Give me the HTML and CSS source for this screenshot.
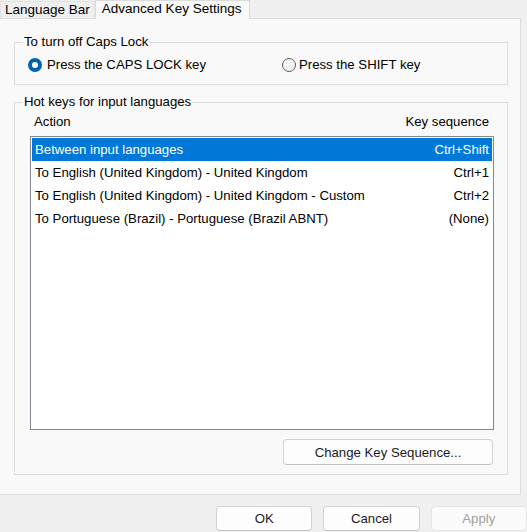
FILE: index.html
```html
<!DOCTYPE html>
<html lang="en">
<head>
    <meta charset="UTF-8">
    <title>Text Services and Input Languages</title>
    <link rel="stylesheet" href="styles.css">
</head>
<body>
    <div class="tabs">
        <div class="tab">Language Bar</div>
        <div class="tab active">Advanced Key Settings</div>
    </div>

    <div class="page">
        <fieldset class="group caps">
            <legend>To turn off Caps Lock</legend>
            <div class="radios">
                <label class="radio checked"><span class="dot"></span>Press the CAPS LOCK key</label>
                <label class="radio tight"><span class="dot"></span>Press the SHIFT key</label>
            </div>
        </fieldset>

        <fieldset class="group hotkeys">
            <legend>Hot keys for input languages</legend>
            <div class="list-head">
                <span>Action</span>
                <span>Key sequence</span>
            </div>
            <ul class="list">
                <li class="selected"><span>Between input languages</span><span>Ctrl+Shift</span></li>
                <li><span>To English (United Kingdom) - United Kingdom</span><span>Ctrl+1</span></li>
                <li><span>To English (United Kingdom) - United Kingdom - Custom</span><span>Ctrl+2</span></li>
                <li><span>To Portuguese (Brazil) - Portuguese (Brazil ABNT)</span><span>(None)</span></li>
            </ul>
            <div class="list-actions">
                <button class="btn change">Change Key Sequence...</button>
            </div>
        </fieldset>
    </div>

    <div class="footer">
        <button class="btn">OK</button>
        <button class="btn">Cancel</button>
        <button class="btn" disabled>Apply</button>
    </div>
</body>
</html>
```

FILE: styles.css
```css
body {
    margin: 0;
    width: 527px;
    height: 532px;
    overflow: hidden;
    background-color: #f0f0f0;
    font-family: "Liberation Sans", Arial, sans-serif;
    font-size: 13.2px;
    color: #000;
}

/* tab strip */
.tabs {
    position: relative;
    z-index: 1;
    display: flex;
    align-items: flex-end;
    height: 18px;
    font-size: 13.5px;
}
.tab {
    box-sizing: border-box;
    height: 17px;
    padding: 0 4px 0 4px;
    line-height: 15px;
    background-color: #efefef;
    border: 1px solid #e2e2e2;
    border-bottom: none;
}
.tab.active {
    height: 19px;
    margin-bottom: -1px;
    padding: 0 8px 0 6px;
    line-height: 16px;
    background-color: #f9f9f9;
    border-color: #dcdcdc;
}

/* property page */
.page {
    box-sizing: border-box;
    width: 521px;
    height: 477px;
    padding-top: 15px;
    background-color: #f9f9f9;
    border: 1px solid #dcdcdc;
    border-left: none;
}

.group {
    margin: 0 12px 0 14px;
    padding: 0 8px;
    border: 1px solid #dcdcdc;
}
.group legend {
    padding: 0 1px;
    line-height: 16px;
}
.caps {
    padding-bottom: 11px;
}
.hotkeys {
    margin-top: 9px;
    padding-bottom: 9px;
}

/* radio buttons */
.radios {
    display: grid;
    grid-template-columns: 254px auto;
    margin: 7px 0 0 5px;
    line-height: 16px;
}
.radio {
    display: flex;
    align-items: center;
    gap: 5px;
}
.radio.tight {
    gap: 3px;
}
.dot {
    box-sizing: border-box;
    width: 14px;
    height: 14px;
    border: 1px solid #5d5d5d;
    border-radius: 50%;
    background-color: #f6f6f6;
}
.radio.checked .dot {
    border: 4px solid #0063b1;
    background-color: #fff;
}

/* hot key list */
.list-head {
    display: flex;
    justify-content: space-between;
    margin-top: 4px;
    padding: 0 10px 0 11px;
    line-height: 16px;
}
.list {
    box-sizing: border-box;
    height: 294px;
    margin: 6px 5px 0 7px;
    padding: 1px;
    list-style: none;
    background-color: #fff;
    border: 1px solid #828790;
}
.list li {
    display: flex;
    justify-content: space-between;
    height: 23px;
    padding: 0 3px;
    line-height: 23px;
}
.list li.selected {
    background-color: #0078d7;
    color: #fff;
}

.list-actions {
    display: flex;
    justify-content: flex-end;
    margin: 9px 6px 0 0;
}

/* push buttons */
.btn {
    box-sizing: border-box;
    width: 97px;
    height: 25px;
    padding: 0;
    font-family: inherit;
    font-size: 13.2px;
    color: #1b1b1b;
    background-color: #fdfdfd;
    border: 1px solid #d3d3d3;
    border-bottom-color: #c2c2c2;
    border-radius: 4px;
}
.btn.change {
    width: 210px;
    height: 26px;
}
.btn:disabled {
    color: #a0a0a0;
    background-color: #fbfbfb;
    border-color: #e5e5e5;
}

.footer {
    display: flex;
    gap: 11px;
    padding: 11px 0 0 216px;
}
```
